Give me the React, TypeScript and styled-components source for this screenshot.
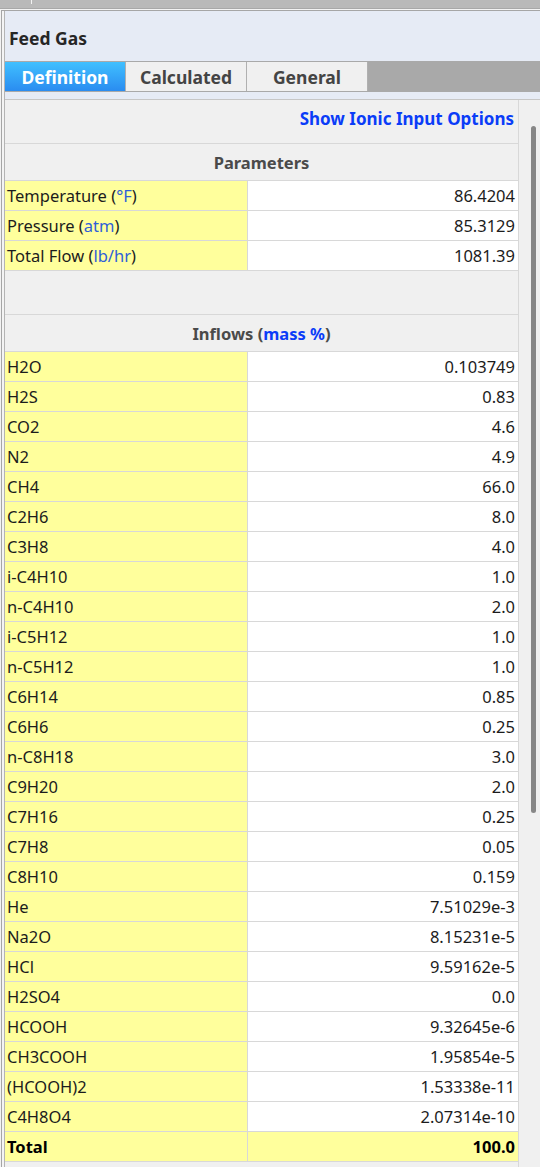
import { createGlobalStyle, styled } from "styled-components";

const GlobalStyle = createGlobalStyle`
  html, body {
    margin: 0;
    padding: 0;
    background: #f3f3f3;
    font-family: "Noto Sans", "Open Sans", sans-serif;
    overflow: hidden;
  }
`;

type Row = { name: string; value: string };

const params: { label: string; unit: string; value: string }[] = [
  { label: "Temperature", unit: "°F", value: "86.4204" },
  { label: "Pressure", unit: "atm", value: "85.3129" },
  { label: "Total Flow", unit: "lb/hr", value: "1081.39" },
];

const inflows: Row[] = [
  { name: "H2O", value: "0.103749" },
  { name: "H2S", value: "0.83" },
  { name: "CO2", value: "4.6" },
  { name: "N2", value: "4.9" },
  { name: "CH4", value: "66.0" },
  { name: "C2H6", value: "8.0" },
  { name: "C3H8", value: "4.0" },
  { name: "i-C4H10", value: "1.0" },
  { name: "n-C4H10", value: "2.0" },
  { name: "i-C5H12", value: "1.0" },
  { name: "n-C5H12", value: "1.0" },
  { name: "C6H14", value: "0.85" },
  { name: "C6H6", value: "0.25" },
  { name: "n-C8H18", value: "3.0" },
  { name: "C9H20", value: "2.0" },
  { name: "C7H16", value: "0.25" },
  { name: "C7H8", value: "0.05" },
  { name: "C8H10", value: "0.159" },
  { name: "He", value: "7.51029e-3" },
  { name: "Na2O", value: "8.15231e-5" },
  { name: "HCl", value: "9.59162e-5" },
  { name: "H2SO4", value: "0.0" },
  { name: "HCOOH", value: "9.32645e-6" },
  { name: "CH3COOH", value: "1.95854e-5" },
  { name: "(HCOOH)2", value: "1.53338e-11" },
  { name: "C4H8O4", value: "2.07314e-10" },
];

const tabs = ["Definition", "Calculated", "General"];

export default function App() {
  return (
    <>
      <GlobalStyle />
      <TopStrip />
      <Frame>
        <Panel>
          <Title>Feed Gas</Title>
          <TabBar>
            {tabs.map((t, i) => (
              <Tab key={t} $active={i === 0}>
                {t}
              </Tab>
            ))}
            <TabFiller />
          </TabBar>
          <TabGap />
          <Body>
            <Scroller>
              <LinkRow>
                <LinkText>Show Ionic Input Options</LinkText>
              </LinkRow>
              <SectionHeader>Parameters</SectionHeader>
              {params.map((p) => (
                <DataRow key={p.label}>
                  <NameCell>
                    {p.label} (<Unit>{p.unit}</Unit>)
                  </NameCell>
                  <ValueCell>{p.value}</ValueCell>
                </DataRow>
              ))}
              <Spacer />
              <SectionHeader>
                Inflows (<BoldUnit>mass %</BoldUnit>)
              </SectionHeader>
              {inflows.map((r) => (
                <DataRow key={r.name}>
                  <NameCell>{r.name}</NameCell>
                  <ValueCell>{r.value}</ValueCell>
                </DataRow>
              ))}
              <DataRow>
                <NameCell $bold>Total</NameCell>
                <ValueCell $bold $yellow>
                  100.0
                </ValueCell>
              </DataRow>
            </Scroller>
            <ScrollTrack>
              <Thumb />
            </ScrollTrack>
          </Body>
        </Panel>
      </Frame>
    </>
  );
}

const TopStrip = styled.div`
  height: 8px;
  background: #b9b9b9;
  border-bottom: 1px solid #a8a8a8;
  position: relative;
  &::after {
    content: "";
    position: absolute;
    left: 31px;
    top: 0;
    width: 1px;
    height: 4px;
    background: #f4f4f4;
  }
`;

const Frame = styled.div`
  margin-top: 1px;
  border-top: 1px solid #a6a6a6;
  border-left: 1px solid #a6a6a6;
  margin-left: 1px;
  padding-left: 2px;
  background: #f4f4f4;
`;

const Panel = styled.div`
  border-left: 1px solid #b4b4b4;
  background: #e6ebf5;
  height: 1156px;
  display: flex;
  flex-direction: column;
`;

const Title = styled.div`
  height: 50px;
  display: flex;
  align-items: center;
  padding-left: 4px;
  padding-top: 4px;
  box-sizing: border-box;
  font-size: 17.5px;
  font-weight: 700;
  color: #262626;
`;

const TabBar = styled.div`
  height: 31px;
  box-sizing: border-box;
  border-top: 1px solid #a9a9a9;
  border-bottom: 1px solid #a9a9a9;
  display: flex;
`;

const Tab = styled.div<{ $active?: boolean }>`
  width: 120px;
  flex: none;
  display: flex;
  align-items: center;
  justify-content: center;
  font-size: 17.5px;
  font-weight: 700;
  border-right: 1px solid #b0b0b0;
  color: ${(p) => (p.$active ? "#ffffff" : "#444444")};
  background: ${(p) =>
    p.$active ? "linear-gradient(#40c0ff, #2a8cf0)" : "#f0f0f0"};
`;

const TabFiller = styled.div`
  flex: 1;
  background: #a9a9a9;
`;

const TabGap = styled.div`
  height: 7px;
  border-bottom: 1px solid #c6c6c6;
`;

const Body = styled.div`
  flex: 1;
  display: flex;
  background: #f0f0f0;
  min-height: 0;
`;

const Scroller = styled.div`
  width: 513px;
  flex: none;
  display: flex;
  flex-direction: column;
  border-right: 1px solid #d8d8d8;
`;

const LinkRow = styled.div`
  height: 44px;
  display: flex;
  align-items: center;
  justify-content: flex-end;
  padding: 0 4px 7px 0;
  border-bottom: 1px solid #d8d8d8;
  box-sizing: border-box;
`;

const LinkText = styled.span`
  color: #0a3cf8;
  font-weight: 700;
  font-size: 17px;
`;

const SectionHeader = styled.div`
  height: 37px;
  display: flex;
  align-items: center;
  justify-content: center;
  font-size: 16.5px;
  font-weight: 700;
  color: #4a4a4a;
  border-bottom: 1px solid #d8d8d8;
  box-sizing: border-box;
`;

const Spacer = styled.div`
  height: 44px;
  border-bottom: 1px solid #d8d8d8;
  box-sizing: border-box;
`;

const DataRow = styled.div`
  height: 30px;
  display: flex;
  border-bottom: 1px solid #d8d8d8;
  box-sizing: border-box;
  font-size: 16.5px;
  color: #1c1c1c;
`;

const NameCell = styled.div<{ $bold?: boolean }>`
  width: 240px;
  flex: none;
  background: #ffff9c;
  border-right: 1px solid #d8d8d8;
  display: flex;
  align-items: center;
  padding-left: 2px;
  white-space: pre;
  font-weight: ${(p) => (p.$bold ? 700 : 400)};
  color: ${(p) => (p.$bold ? "#000" : "inherit")};
`;

const ValueCell = styled.div<{ $bold?: boolean; $yellow?: boolean }>`
  flex: 1;
  background: ${(p) => (p.$yellow ? "#ffff9c" : "#ffffff")};
  display: flex;
  align-items: center;
  justify-content: flex-end;
  padding-right: 3px;
  font-weight: ${(p) => (p.$bold ? 700 : 400)};
  color: ${(p) => (p.$bold ? "#000" : "inherit")};
`;

const Unit = styled.span`
  color: #2e5fd8;
`;

const BoldUnit = styled.span`
  color: #0a3cf8;
`;

const ScrollTrack = styled.div`
  flex: 1;
  position: relative;
  background: #f0f0f0;
`;

const Thumb = styled.div`
  position: absolute;
  left: 12px;
  top: 26px;
  width: 5px;
  height: 687px;
  border-radius: 3px;
  background: #878787;
`;
